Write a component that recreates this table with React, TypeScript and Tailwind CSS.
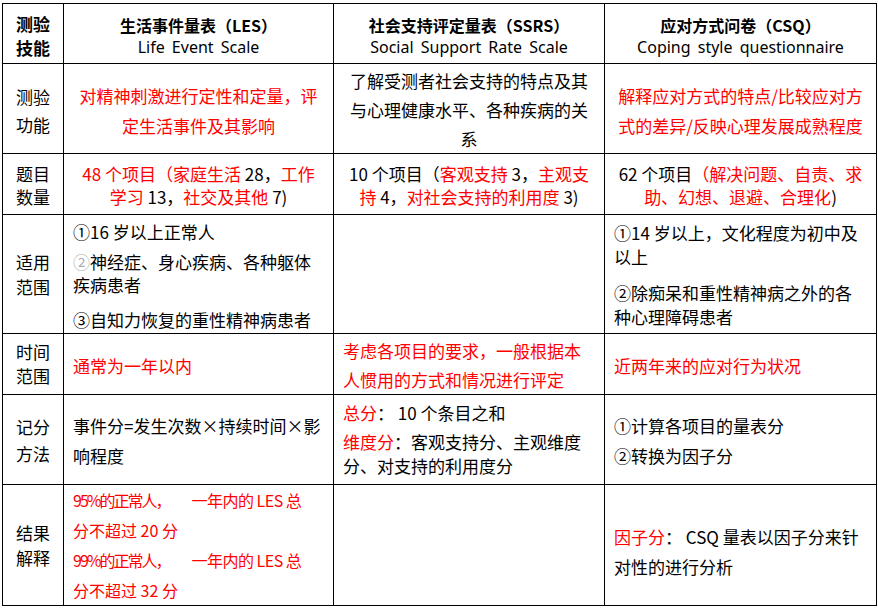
import React from 'react';

const R: React.FC<{ children: React.ReactNode }> = ({ children }) => (
  <span className="text-[#ff0000]">{children}</span>
);

const cell = 'border border-black p-0 align-middle';
const head = `${cell} text-center`;
const latin = "font-['Noto_Sans',sans-serif] text-[16px] [word-spacing:3px]";

export default function App() {
  return (
    <div className="min-h-screen bg-white pl-[2px] pt-[3px] font-['Noto_Sans_CJK_SC','Noto_Sans',sans-serif] text-[17px] text-black">
      <table className="table-fixed border-collapse w-[874px]">
        <colgroup>
          <col className="w-[61px]" />
          <col className="w-[270px]" />
          <col className="w-[271px]" />
          <col className="w-[272px]" />
        </colgroup>
        <tbody>
          {/* header */}
          <tr className="h-[60px]">
            <td className={`${head} pt-[4px] font-bold leading-[24px]`}>
              测验
              <br />
              技能
            </td>
            <td className={`${head} pt-[4px] leading-[22px]`}>
              <div className="text-[16px] font-bold">生活事件量表（LES）</div>
              <div className={latin}>Life Event Scale</div>
            </td>
            <td className={`${head} pt-[4px] leading-[22px]`}>
              <div className="text-[16px] font-bold">社会支持评定量表（SSRS）</div>
              <div className={latin}>Social Support Rate Scale</div>
            </td>
            <td className={`${head} pt-[4px] leading-[22px]`}>
              <div className="text-[16px] font-bold">应对方式问卷（CSQ）</div>
              <div className={latin}>Coping style questionnaire</div>
            </td>
          </tr>

          {/* 测验功能 */}
          <tr className="h-[90px]">
            <td className={`${head} pt-[4px] leading-[28px]`}>
              测验
              <br />
              功能
            </td>
            <td className={`${head} pt-[4px] leading-[30px] text-[#ff0000]`}>
              对精神刺激进行定性和定量，评
              <br />
              定生活事件及其影响
            </td>
            <td className={`${head} pt-[2px] leading-[29px]`}>
              了解受测者社会支持的特点及其
              <br />
              与心理健康水平、各种疾病的关
              <br />
              系
            </td>
            <td className={`${head} pt-[4px] leading-[30px] text-[#ff0000]`}>
              解释应对方式的特点/比较应对方
              <br />
              式的差异/反映心理发展成熟程度
            </td>
          </tr>

          {/* 题目数量 */}
          <tr className="h-[61px]">
            <td className={`${head} pt-[2px] leading-[23px]`}>
              题目
              <br />
              数量
            </td>
            <td className={`${head} pt-[2px] leading-[23px]`}>
              <R>48 个项目（家庭生活</R> 28，<R>工作</R>
              <br />
              <R>学习</R> 13，<R>社交及其他</R> 7)
            </td>
            <td className={`${head} pt-[2px] leading-[23px]`}>
              10 个项目（<R>客观支持</R> 3，<R>主观支</R>
              <br />
              <R>持</R> 4，<R>对社会支持的利用度</R> 3)
            </td>
            <td className={`${head} pt-[2px] leading-[23px]`}>
              62 个项目<R>（解决问题、自责、求</R>
              <br />
              <R>助、幻想、退避、合理化</R>)
            </td>
          </tr>

          {/* 适用范围 */}
          <tr className="h-[119px]">
            <td className={`${head} leading-[25px]`}>
              适用
              <br />
              范围
            </td>
            <td className={`${cell} pl-[9px] pt-[2px] leading-[23px]`}>
              <p>①16 岁以上正常人</p>
              <p className="mt-[7px]">
                <span className="text-[#b0b0b0]">②</span>神经症、身心疾病、各种躯体
                <br />
                疾病患者
              </p>
              <p className="mt-[12px]">③自知力恢复的重性精神病患者</p>
            </td>
            <td className={cell} />
            <td className={`${cell} pl-[9px] pt-[2px] leading-[24px]`}>
              <p>
                ①14 岁以上，文化程度为初中及
                <br />
                以上
              </p>
              <p className="mt-[12px]">
                ②除痴呆和重性精神病之外的各
                <br />
                种心理障碍患者
              </p>
            </td>
          </tr>

          {/* 时间范围 */}
          <tr className="h-[61px]">
            <td className={`${head} leading-[24px]`}>
              时间
              <br />
              范围
            </td>
            <td className={`${cell} pl-[9px] pt-[4px] text-[#ff0000]`}>通常为一年以内</td>
            <td className={`${cell} pl-[9px] pt-[2px] leading-[29px] text-[#ff0000]`}>
              考虑各项目的要求，一般根据本
              <br />
              人惯用的方式和情况进行评定
            </td>
            <td className={`${cell} pl-[9px] pt-[4px] text-[#ff0000]`}>近两年来的应对行为状况</td>
          </tr>

          {/* 记分方法 */}
          <tr className="h-[90px]">
            <td className={`${head} leading-[27px]`}>
              记分
              <br />
              方法
            </td>
            <td className={`${cell} pl-[9px] pt-[2px] leading-[30px]`}>
              事件分=发生次数×持续时间×影
              <br />
              响程度
            </td>
            <td className={`${cell} pl-[9px] leading-[24px]`}>
              <p>
                <R>总分</R>：&nbsp;10 个条目之和
              </p>
              <p className="mt-[5px]">
                <R>维度分</R>：客观支持分、主观维度
                <br />
                分、对支持的利用度分
              </p>
            </td>
            <td className={`${cell} pl-[9px] pt-[2px] leading-[30px]`}>
              ①计算各项目的量表分
              <br />
              ②转换为因子分
            </td>
          </tr>

          {/* 结果解释 */}
          <tr className="h-[120px]">
            <td className={`${head} leading-[25px]`}>
              结果
              <br />
              解释
            </td>
            <td className={`${cell} pl-[9px] text-[16px] leading-[30px] text-[#ff0000]`}>
              <span className="tracking-[-2px]">95%的正常人，</span>
              <span className="inline-block w-[22px]" />
              <span className="tracking-[-0.5px]">一年内的 LES 总</span>
              <br />
              分不超过 20 分
              <br />
              <span className="tracking-[-2px]">99%的正常人，</span>
              <span className="inline-block w-[22px]" />
              <span className="tracking-[-0.5px]">一年内的 LES 总</span>
              <br />
              分不超过 32 分
            </td>
            <td className={cell} />
            <td className={`${cell} pl-[9px] pt-[14px] leading-[30px]`}>
              <R>因子分</R>：&nbsp;CSQ 量表以因子分来针
              <br />
              对性的进行分析
            </td>
          </tr>
        </tbody>
      </table>
    </div>
  );
}
